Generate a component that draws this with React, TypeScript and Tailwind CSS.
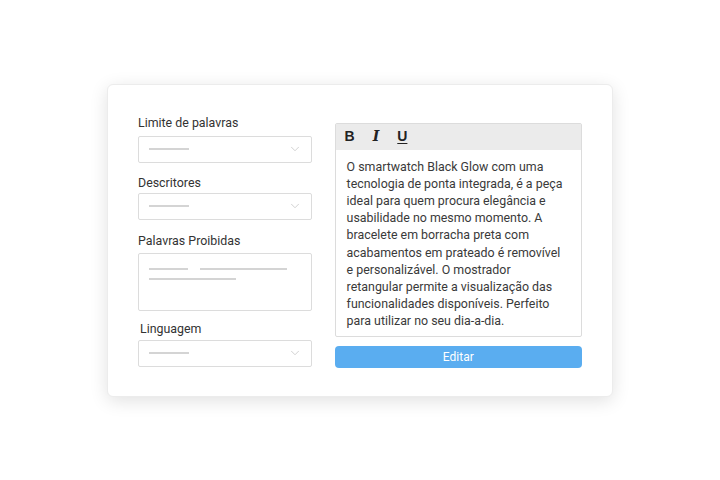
import { ChevronDown } from "lucide-react";

const font = { fontFamily: "Roboto, 'Noto Sans', sans-serif" };

function Select() {
  return (
    <div className="flex h-[27px] w-full items-center justify-between rounded-[2px] border border-[#dcdcdc] bg-white pl-[10px] pr-[9px]">
      <div className="h-[2px] w-[40px] bg-[#d4d4d4]" />
      <ChevronDown className="h-[14px] w-[14px] text-[#c4c4c4]" strokeWidth={1.3} />
    </div>
  );
}

const lines = [
  "O smartwatch Black Glow com uma",
  "tecnologia de ponta integrada, é a peça",
  "ideal para quem procura elegância e",
  "usabilidade no mesmo momento. A",
  "bracelete em borracha preta com",
  "acabamentos em prateado é removível",
  "e personalizável. O mostrador",
  "retangular permite a visualização das",
  "funcionalidades disponíveis. Perfeito",
  "para utilizar no seu dia-a-dia.",
];

export default function App() {
  return (
    <div className="flex h-[480px] w-[720px] items-center justify-center bg-white" style={font}>
      <div className="flex h-[313px] w-[506px] gap-[23px] rounded-[6px] border border-[#ececec] bg-white pl-[30px] pr-[30px] pt-[30px] shadow-[0_4px_18px_rgba(0,0,0,0.12)]">
        {/* coluna esquerda */}
        <div className="flex w-[174px] flex-col text-[12.4px] leading-[16px] text-[#333]">
          <p>Limite de palavras</p>
          <div className="mt-[5px]">
            <Select />
          </div>
          <p className="mt-[12px]">Descritores</p>
          <div className="mt-[2px]">
            <Select />
          </div>
          <p className="mt-[13px]">Palavras Proibidas</p>
          <div className="mt-[4px] flex h-[58px] flex-col gap-[8px] rounded-[2px] border border-[#dcdcdc] bg-white pl-[10px] pt-[14px]">
            <div className="flex gap-[12px]">
              <div className="h-[2px] w-[39px] bg-[#d4d4d4]" />
              <div className="h-[2px] w-[87px] bg-[#d4d4d4]" />
            </div>
            <div className="h-[2px] w-[87px] bg-[#d4d4d4]" />
          </div>
          <p className="mt-[10px] pl-[2px]">Linguagem</p>
          <div className="mt-[3px]">
            <Select />
          </div>
        </div>

        {/* editor */}
        <div className="flex w-[248px] flex-col pt-[8px]">
          <div className="flex h-[214px] flex-col rounded-[2px] border border-[#dcdcdc] bg-white">
            <div className="flex h-[26px] items-center gap-[18px] bg-[#ebebeb] pl-[9px] text-[14px] text-[#222]">
              <span className="font-bold" style={{ fontFamily: "'Liberation Sans', Arial, sans-serif" }}>B</span>
              <span
                className="font-bold italic"
                style={{ fontFamily: "'DejaVu Serif', 'Liberation Serif', serif", fontSize: 14 }}
              >
                I
              </span>
              <span className="font-bold underline underline-offset-2" style={{ fontFamily: "'Liberation Sans', Arial, sans-serif" }}>U</span>
            </div>
            <div className="px-[11px] pt-[8px] text-[12.4px] leading-[17.2px] text-[#3a3a3a]">
              {lines.map((l) => (
                <p key={l} className="whitespace-nowrap">
                  {l}
                </p>
              ))}
            </div>
          </div>
          <button className="mt-[9px] flex h-[22px] items-center justify-center rounded-[4px] bg-[#5aadf0] text-[12px] text-white">
            Editar
          </button>
        </div>
      </div>
    </div>
  );
}
